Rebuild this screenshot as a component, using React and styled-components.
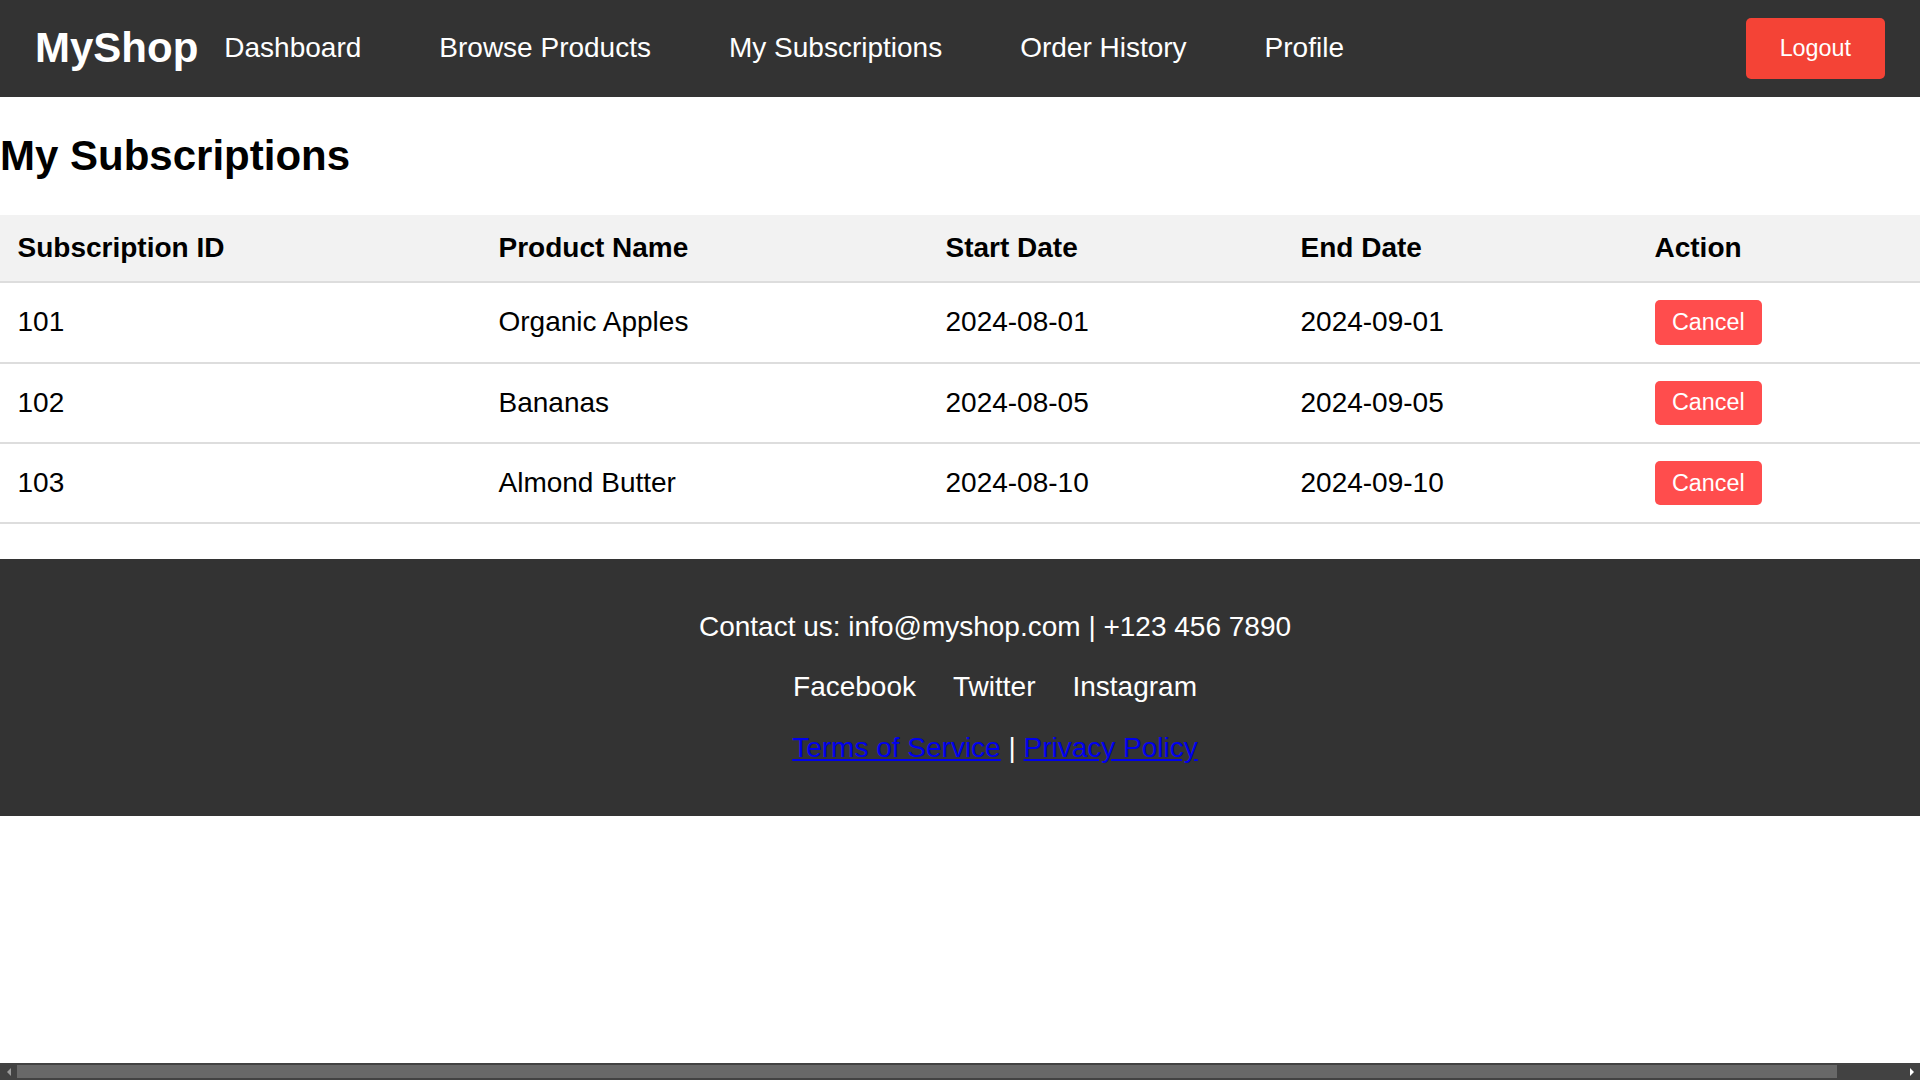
import React from "react";
import styled, { createGlobalStyle } from "styled-components";

const GlobalStyle = createGlobalStyle`
  body {
    margin: 0;
    font-family: "Liberation Sans", Arial, sans-serif;
    background: #fff;
    color: #000;
  }
`;

const subscriptions = [
  { id: 101, product: "Organic Apples", start: "2024-08-01", end: "2024-09-01" },
  { id: 102, product: "Bananas", start: "2024-08-05", end: "2024-09-05" },
  { id: 103, product: "Almond Butter", start: "2024-08-10", end: "2024-09-10" },
];

// widths are the full column widths, padding included
const columns = [
  { label: "Subscription ID", width: 481 },
  { label: "Product Name", width: 447 },
  { label: "Start Date", width: 355 },
  { label: "End Date", width: 354 },
  { label: "Action", width: 283 },
];

const navItems = ["Dashboard", "Browse Products", "My Subscriptions", "Order History", "Profile"];

export default function App() {
  return (
    <>
      <GlobalStyle />
      <Header>
        <Brand>
          <Logo>MyShop</Logo>
          <Nav>
            {navItems.map((item) => (
              <NavLink key={item} href="#">
                {item}
              </NavLink>
            ))}
          </Nav>
        </Brand>
        <LogoutButton>Logout</LogoutButton>
      </Header>

      <Main>
        <Title>My Subscriptions</Title>
        <Table>
          <thead>
            <tr>
              {columns.map((col) => (
                <Th key={col.label} $width={col.width}>
                  {col.label}
                </Th>
              ))}
            </tr>
          </thead>
          <tbody>
            {subscriptions.map((sub) => (
              <tr key={sub.id}>
                <Td>{sub.id}</Td>
                <Td>{sub.product}</Td>
                <Td>{sub.start}</Td>
                <Td>{sub.end}</Td>
                <Td>
                  <CancelButton>Cancel</CancelButton>
                </Td>
              </tr>
            ))}
          </tbody>
        </Table>
      </Main>

      <Footer>
        <FooterLine>Contact us: info@myshop.com | +123 456 7890</FooterLine>
        <Social>
          <SocialLink href="#">Facebook</SocialLink>
          <SocialLink href="#">Twitter</SocialLink>
          <SocialLink href="#">Instagram</SocialLink>
        </Social>
        <FooterLine>
          <LegalLink href="#">Terms of Service</LegalLink> | <LegalLink href="#">Privacy Policy</LegalLink>
        </FooterLine>
      </Footer>

      <ScrollBar>
        <Arrow $dir="left" />
        <Thumb />
        <Arrow $dir="right" />
      </ScrollBar>
    </>
  );
}

const Header = styled.header`
  display: flex;
  justify-content: space-between;
  align-items: center;
  background: #333;
  padding: 17.5px 35px;
`;

const Brand = styled.div`
  display: flex;
  align-items: center;
`;

const Logo = styled.div`
  color: #fff;
  font-size: 42px;
  font-weight: bold;
  line-height: 1.15;
`;

const Nav = styled.nav`
  display: flex;
  gap: 26px;
`;

const NavLink = styled.a`
  color: #fff;
  text-decoration: none;
  font-size: 28px;
  padding: 0 26px;
`;

const LogoutButton = styled.button`
  background: #f44336;
  color: #fff;
  border: none;
  border-radius: 5px;
  padding: 17.5px 34px;
  font-family: inherit;
  font-size: 23.33px;
  line-height: 1.15;
`;

const Main = styled.main`
  margin-bottom: 35px;
`;

const Title = styled.h2`
  margin: 35px 0;
  font-size: 42px;
  line-height: 1.15;
`;

const Table = styled.table`
  width: 100%;
  border-collapse: collapse;
  table-layout: fixed;
  font-size: 28px;
`;

const Th = styled.th`
  box-sizing: border-box;
  width: ${(p) => p.$width}px;
  background: #f2f2f2;
  text-align: left;
  padding: 17px 17.5px;
  border-bottom: 2px solid #ddd;
  line-height: 1.15;
`;

const Td = styled.td`
  padding: 17px 17.5px;
  border-bottom: 2px solid #ddd;
  line-height: 1.15;
`;

const CancelButton = styled.button`
  background: #ff4d4d;
  color: #fff;
  border: none;
  border-radius: 5px;
  padding: 8.75px 17.5px;
  font-family: inherit;
  font-size: 23.33px;
  line-height: 1.15;
`;

const Footer = styled.footer`
  background: #333;
  color: #fff;
  text-align: center;
  padding: 52px 0 52px 70px;
  display: flex;
  flex-direction: column;
  gap: 28px;
  font-size: 28px;
  line-height: 1.15;
`;

const FooterLine = styled.div``;

const Social = styled.div`
  display: flex;
  justify-content: center;
  gap: 37px;
`;

const SocialLink = styled.a`
  color: #fff;
  text-decoration: none;
`;

const LegalLink = styled.a`
  color: #0000ee;
  text-decoration: underline;
`;

/* horizontal page scrollbar shown at the bottom of the window */
const ScrollBar = styled.div`
  position: fixed;
  left: 0;
  right: 0;
  bottom: 0;
  height: 17px;
  background: #424242;
  display: flex;
  align-items: center;
`;

const Thumb = styled.div`
  width: 1820px;
  height: 13px;
  background: #686868;
`;

const Arrow = styled.div`
  width: 17px;
  height: 17px;
  flex: ${(p) => (p.$dir === "right" ? "1" : "none")};
  display: flex;
  align-items: center;
  justify-content: ${(p) => (p.$dir === "right" ? "flex-end" : "center")};
  padding-right: ${(p) => (p.$dir === "right" ? "6px" : "0")};

  &::before {
    content: "";
    width: 0;
    height: 0;
    border-top: 4px solid transparent;
    border-bottom: 4px solid transparent;
    ${(p) =>
      p.$dir === "right"
        ? "border-left: 4px solid #fff;"
        : "border-right: 4px solid #9a9a9a;"}
  }
`;
